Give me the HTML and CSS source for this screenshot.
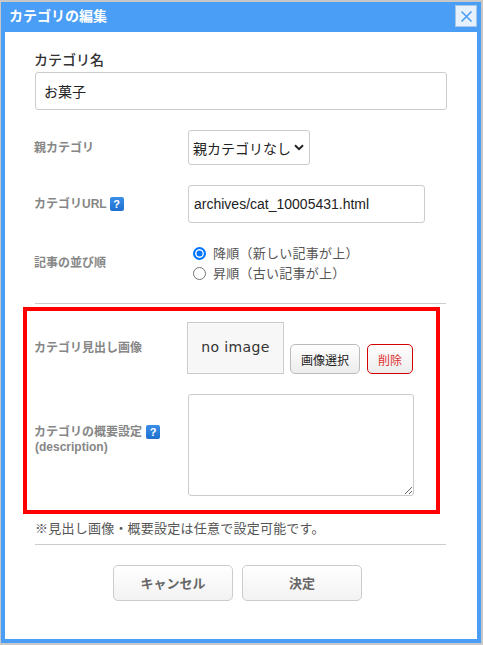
FILE: index.html
```html
<!DOCTYPE html>
<html lang="ja">
<head>
<meta charset="utf-8">
<title>カテゴリの編集</title>
<link rel="stylesheet" href="styles.css">
</head>
<body>
<div class="dialog">
  <header class="titlebar">
    <h1 class="title">カテゴリの編集</h1>
    <button class="close" type="button" aria-label="閉じる">
      <svg width="13" height="13" viewBox="0 0 13 13"><path d="M1.5 1.5l10 10M11.5 1.5l-10 10" stroke="#4a9ef5" stroke-width="1.6" fill="none"/></svg>
    </button>
  </header>
  <main class="content">
    <label class="name-label">カテゴリ名</label>
    <input class="field name-input" type="text" value="お菓子">

    <div class="row row-parent">
      <div class="label">親カテゴリ</div>
      <div class="select-box">
        <span class="select-text">親カテゴリなし</span>
        <svg class="chev" width="10" height="7" viewBox="0 0 10 7"><path d="M1 1.2l4 4 4-4" stroke="#222" stroke-width="2" fill="none"/></svg>
      </div>
    </div>

    <div class="row row-url">
      <div class="label">カテゴリURL<span class="help">?</span></div>
      <input class="field url-input" type="text" value="archives/cat_10005431.html">
    </div>

    <div class="row row-order">
      <div class="label label-order">記事の並び順</div>
      <div class="radios">
        <div class="radio-line"><span class="radio on"></span>降順（新しい記事が上）</div>
        <div class="radio-line"><span class="radio"></span>昇順（古い記事が上）</div>
      </div>
    </div>

    <hr class="rule rule-top">

    <section class="redbox">
      <div class="row row-image">
        <div class="label label-image">カテゴリ見出し画像</div>
        <div class="noimage">no image</div>
        <button class="btn-small" type="button">画像選択</button>
        <button class="btn-small btn-delete" type="button">削除</button>
      </div>
      <div class="row row-desc">
        <div class="label label-desc">カテゴリの概要設定<span class="help help-desc">?</span><br>(description)</div>
        <textarea class="field desc"></textarea>
      </div>
    </section>

    <p class="note">※見出し画像・概要設定は任意で設定可能です。</p>
    <hr class="rule rule-bottom">

    <div class="actions">
      <button class="btn-main" type="button">キャンセル</button>
      <button class="btn-main" type="button">決定</button>
    </div>
  </main>
</div>
</body>
</html>
```
FILE: styles.css
```css
* { box-sizing: border-box; }
html, body { margin: 0; height: 100%; }
body {
  width: 483px;
  height: 645px;
  padding: 2px 2px 2px 1px;
  background: #c8c8c8;
  font-family: "Liberation Sans", "Noto Sans CJK JP", sans-serif;
  color: #333;
  overflow: hidden;
}
.dialog {
  height: 641px;
  background: #4a9ef5;
  padding: 0 4px 4px 4px;
  display: flex;
  flex-direction: column;
}
.titlebar {
  height: 30px;
  flex: none;
  display: flex;
  align-items: flex-start;
  justify-content: space-between;
}
.title {
  margin: 4px 0 0 4px;
  font-size: 14px;
  line-height: 20px;
  font-weight: 700;
  color: #fff;
}
.close {
  width: 22px;
  height: 22px;
  margin: 3px 0 0 0;
  padding: 0;
  border: 1px solid #a9c6e6;
  background: #e6f1fd;
  display: flex;
  align-items: center;
  justify-content: center;
}
.content {
  flex: 1;
  background: #fff;
  padding: 0 30px;
  display: flex;
  flex-direction: column;
}
.name-label {
  margin: 18px 0 2px -1px;
  font-size: 14px;
  line-height: 20px;
  font-weight: 500;
  color: #333;
}
.field {
  display: block;
  border: 1px solid #ccc;
  border-radius: 3px;
  background: #fff;
  font-family: inherit;
  color: #222;
  outline: none;
}
.name-input {
  width: 412px;
  height: 38px;
  padding: 0 8px;
  font-size: 14px;
}
.row {
  display: flex;
  align-items: center;
}
.label {
  width: 153px;
  flex: none;
  font-size: 12px;
  line-height: 16px;
  font-weight: 700;
  color: #868686;
  text-indent: -1px;
}
.row-parent { margin-top: 20px; height: 35px; }
.select-box {
  width: 122px;
  height: 35px;
  border: 1px solid #ccc;
  border-radius: 3px;
  display: flex;
  align-items: center;
  padding-left: 4px;
  font-size: 14px;
  color: #222;
}
.select-text { white-space: nowrap; }
.chev { margin-left: 3px; flex: none; }
.row-url { margin-top: 20px; }
.url-input {
  width: 237px;
  height: 38px;
  padding: 0 5px;
  font-size: 14px;
}
.help {
  display: inline-block;
  width: 14px;
  height: 14px;
  margin-left: 3px;
  border-radius: 2px;
  background: linear-gradient(#3a8fe8, #1f6fcf);
  color: #fff;
  font-size: 11px;
  line-height: 14px;
  font-weight: 700;
  text-align: center;
  text-indent: 0;
  vertical-align: 0;
}
.row-order { margin-top: 19px; height: 43px; }
.label-order { margin-top: -2px; }
.radios {
  padding-left: 5px;
  font-size: 13px;
  line-height: 20px;
  letter-spacing: 0.25px;
  color: #555;
}
.radio-line { display: flex; align-items: center; white-space: nowrap; }
.radio {
  width: 13px;
  height: 13px;
  margin-right: 7px;
  border: 1px solid #767676;
  border-radius: 50%;
  background: #fff;
  flex: none;
}
.radio.on {
  border: 2px solid #0075ff;
  background: #0075ff;
  box-shadow: inset 0 0 0 1.5px #fff;
}
.rule {
  width: 411px;
  height: 1px;
  margin: 0;
  border: 0;
  background: #ccc;
  flex: none;
}
.rule-top { margin-top: 18px; }
.redbox {
  width: 417px;
  height: 207px;
  margin: 3px 0 0 -12px;
  padding: 11px 0 0 8px;
  border: 4px solid #f00;
  flex: none;
}
.row-image { align-items: flex-end; height: 52px; }
.label-image { width: 152px; align-self: center; }
.noimage {
  width: 97px;
  height: 52px;
  background: #f7f7f7;
  border: 1px solid #ccc;
  font-family: "DejaVu Sans", sans-serif;
  font-size: 14px;
  letter-spacing: 0.4px;
  line-height: 49px;
  text-align: center;
  color: #333;
}
.btn-small {
  width: 70px;
  height: 30px;
  margin-left: 6px;
  padding: 0;
  border: 1px solid #bbb;
  border-radius: 5px;
  background: linear-gradient(#fff, #ececec);
  font-family: inherit;
  font-size: 12px;
  color: #222;
}
.btn-delete {
  width: 46px;
  margin-left: 7px;
  border-color: #d40000;
  color: #e03030;
}
.row-desc { margin-top: 20px; align-items: flex-start; }
.label-desc { width: 153px; margin-top: 31px; line-height: 15px; }
.help-desc { margin-left: 4px; vertical-align: top; margin-top: 0; }
.desc {
  width: 226px;
  height: 102px;
  resize: both;
}
.note {
  margin: 6px 0 0 0;
  font-size: 13px;
  line-height: 18px;
  letter-spacing: 0.23px;
  color: #555;
  white-space: nowrap;
}
.rule-bottom { margin-top: 6px; }
.actions {
  margin: 20px 0 0 78px;
  display: flex;
  gap: 9px;
}
.btn-main {
  width: 120px;
  height: 36px;
  padding: 0 0 2px;
  border: 1px solid #ccc;
  border-radius: 5px;
  background: linear-gradient(#fff, #f2f2f2);
  font-family: inherit;
  font-size: 13px;
  font-weight: 700;
  color: #666;
}
```
